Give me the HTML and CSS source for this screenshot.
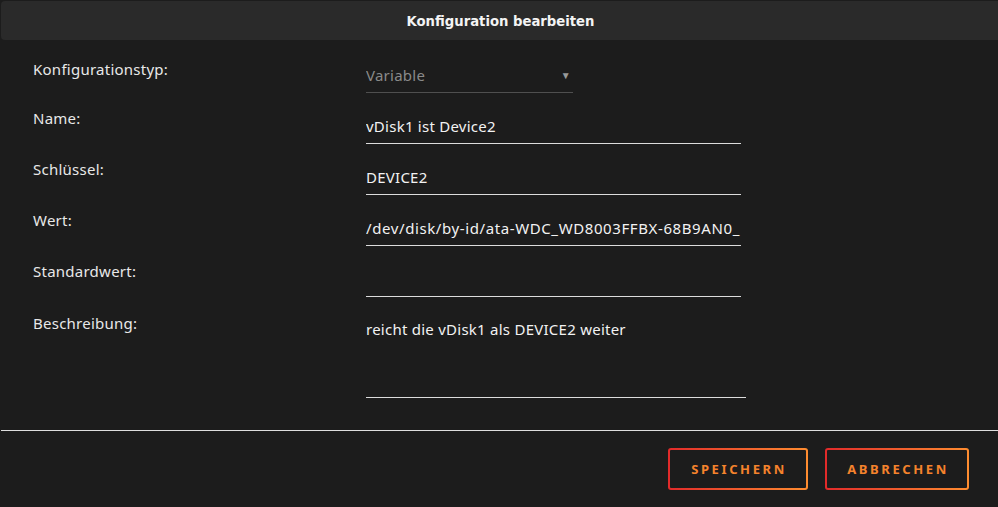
FILE: index.html
```html
<!DOCTYPE html>
<html lang="de">
<head>
<meta charset="utf-8">
<title>Konfiguration bearbeiten</title>
<link rel="stylesheet" href="styles.css">
</head>
<body>
<div class="dialog">
  <div class="titlebar">Konfiguration bearbeiten</div>
  <form class="form">
    <div class="row">
      <div class="label label-first">Konfigurationstyp:</div>
      <div class="field select"><span class="select-value">Variable</span><span class="arrow">▼</span></div>
    </div>
    <div class="row">
      <div class="label">Name:</div>
      <div class="field">vDisk1 ist Device2</div>
    </div>
    <div class="row">
      <div class="label">Schlüssel:</div>
      <div class="field">DEVICE2</div>
    </div>
    <div class="row">
      <div class="label">Wert:</div>
      <div class="field wide">/dev/disk/by-id/ata-WDC_WD8003FFBX-68B9AN0_</div>
    </div>
    <div class="row">
      <div class="label">Standardwert:</div>
      <div class="field"></div>
    </div>
    <div class="row row-tall">
      <div class="label label-tall">Beschreibung:</div>
      <div class="field textarea">reicht die vDisk1 als DEVICE2 weiter</div>
    </div>
  </form>
  <div class="divider"></div>
  <div class="actions">
    <button type="button" class="btn btn-save">SPEICHERN</button>
    <button type="button" class="btn btn-cancel">ABBRECHEN</button>
  </div>
</div>
</body>
</html>
```

FILE: styles.css
```css
html, body {
  margin: 0;
  padding: 0;
  background: #1c1c1c;
}

body {
  width: 998px;
  height: 507px;
  overflow: hidden;
  font-family: "Noto Sans", "Open Sans", sans-serif;
  font-size: 15px;
  letter-spacing: 0.25px;
  color: #e6e6e6;
}

.dialog {
  display: flex;
  flex-direction: column;
}

.titlebar {
  margin: 1px 0 0 1px;
  height: 39px;
  background: #2a2a2a;
  border-radius: 4px 0 0 4px;
  display: flex;
  align-items: center;
  justify-content: center;
  font-family: "DejaVu Sans", sans-serif;
  font-stretch: condensed;
  font-weight: bold;
  font-size: 14.7px;
  letter-spacing: 0;
  color: #f4f4f4;
  padding-left: 2px;
}

.form {
  display: flex;
  flex-direction: column;
  padding: 11px 0 0 33px;
}

.row {
  display: grid;
  grid-template-columns: 333px 375px;
  height: 51px;
}

.row-tall {
  height: 101px;
  grid-template-columns: 333px 380px;
}

.label {
  padding-top: 6px;
  line-height: 20px;
  color: #e8e8e8;
}

.label-first {
  padding-top: 8px;
}

.label-tall {
  padding-top: 7px;
}

.field {
  box-sizing: border-box;
  height: 42px;
  padding: 14px 0 7px 0;
  line-height: 20px;
  border-bottom: 1px solid #dcdcdc;
  color: #f2f2f2;
  white-space: nowrap;
  overflow: hidden;
}

.wide {
  letter-spacing: 0.6px;
}

.select {
  width: 207px;
  border-bottom-color: #4f4f4f;
  display: flex;
  justify-content: space-between;
  padding-top: 14px;
  padding-right: 2px;
}

.select-value {
  color: #8a8a8a;
}

.arrow {
  color: #9a9a9a;
  font-size: 10px;
  line-height: 20px;
}

.textarea {
  height: 92px;
  padding-top: 13px;
  white-space: normal;
}

.divider {
  margin: 23px 0 0 1px;
  height: 1px;
  background: #dedede;
}

.actions {
  display: flex;
  justify-content: flex-end;
  gap: 17px;
  padding: 17px 29px 0 0;
}

.btn {
  box-sizing: border-box;
  height: 42px;
  border: 2px solid transparent;
  border-radius: 3px;
  background:
    linear-gradient(#1c1c1c, #1c1c1c) padding-box,
    linear-gradient(90deg, #e22a2a, #ff8d30) border-box;
  color: #f5832c;
  font-family: "Noto Sans", sans-serif;
  font-weight: bold;
  font-size: 13px;
  letter-spacing: 2.6px;
  padding: 0 0 0 2px;
  cursor: pointer;
}

.btn-save {
  width: 140px;
}

.btn-cancel {
  width: 144px;
}
```
